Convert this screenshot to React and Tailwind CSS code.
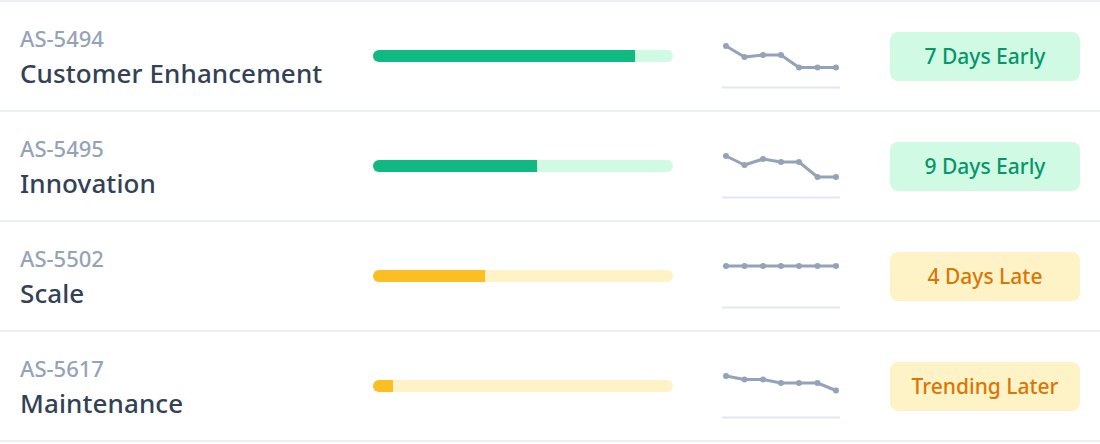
import React from 'react';

const rows = [
  {
    id: 'AS-5494',
    name: 'Customer Enhancement',
    progress: 87.3,
    tone: 'green',
    points: [44, 55, 53, 53, 65.5, 65.5, 65.5],
    status: '7 Days Early',
  },
  {
    id: 'AS-5495',
    name: 'Innovation',
    progress: 54.7,
    tone: 'green',
    points: [44, 53, 47, 50, 50, 65, 65],
    status: '9 Days Early',
  },
  {
    id: 'AS-5502',
    name: 'Scale',
    progress: 37.3,
    tone: 'amber',
    points: [44, 44, 44, 44, 44, 44, 44],
    status: '4 Days Late',
  },
  {
    id: 'AS-5617',
    name: 'Maintenance',
    progress: 6.7,
    tone: 'amber',
    points: [44, 47.5, 47.5, 51, 51, 51, 58.5],
    status: 'Trending Later',
  },
];

const xs = [4, 22.5, 41, 59, 77, 95.5, 114];

function Sparkline({ points }) {
  const d = points.map((y, i) => `${i === 0 ? 'M' : 'L'}${xs[i]} ${y}`).join(' ');
  return (
    <svg width="118" height="108" viewBox="0 0 118 108" className="shrink-0">
      <line x1="0" y1="85.5" x2="118" y2="85.5" stroke="#e2e8f0" strokeWidth="2" />
      <path d={d} fill="none" stroke="#94a3b8" strokeWidth="3" strokeLinejoin="round" strokeLinecap="round" />
      {points.map((y, i) => (
        <circle key={i} cx={xs[i]} cy={y} r="3" fill="#94a3b8" />
      ))}
    </svg>
  );
}

function Row({ row }) {
  const green = row.tone === 'green';
  return (
    <div className="flex h-[110px] items-center border-b-2 border-[#eceff4] pl-5">
      {/* TITLE */}
      <div className="w-[353px] shrink-0 pt-[1px]">
        <div className="text-[22px] font-medium leading-[28px] text-[#94a3b8]">{row.id}</div>
        <div className="mt-[5px] text-[26px] font-medium leading-[32px] tracking-[0.1px] text-[#334155]">{row.name}</div>
      </div>

      {/* PROGRESS */}
      <div
        className={`h-3 w-[300px] shrink-0 overflow-hidden rounded-full ${
          green ? 'bg-[#d1fae5]' : 'bg-[#fef3c7]'
        }`}
      >
        <div
          className={`h-full ${green ? 'bg-[#10b981]' : 'bg-[#fbbf24]'}`}
          style={{ width: `${row.progress}%` }}
        />
      </div>

      {/* TREND */}
      <div className="ml-[49px] self-stretch">
        <Sparkline points={row.points} />
      </div>

      {/* STATUS */}
      <div
        className={`ml-[50px] flex h-[49px] w-[190px] shrink-0 items-center justify-center rounded-lg pt-[2px] text-[21px] font-medium ${
          green ? 'bg-[#d1fae5] text-[#059669]' : 'bg-[#fef3c7] text-[#d97706]'
        }`}
      >
        {row.status}
      </div>
    </div>
  );
}

export default function App() {
  return (
    <div
      className="w-[1100px] border-t-2 border-[#eceff4] bg-white"
      style={{ fontFamily: '"Noto Sans", "Open Sans", sans-serif' }}
    >
      {rows.map((row) => (
        <Row key={row.id} row={row} />
      ))}
    </div>
  );
}
